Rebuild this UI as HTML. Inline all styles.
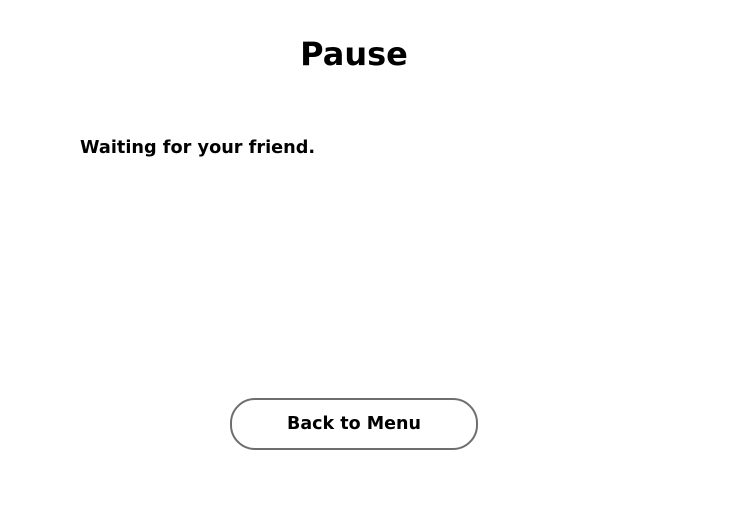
<!DOCTYPE html>
<html><head><style>
html,body{margin:0;padding:0;background:#fff;width:741px;height:530px;overflow:hidden;font-family:"DejaVu Sans",sans-serif;font-weight:bold;color:#000}
h1{position:absolute;left:0;width:708px;top:32px;margin:0;text-align:center;font-size:32px;line-height:44px}
.w{position:absolute;left:80px;top:136px;font-size:17.7px;line-height:24px}
.b{position:absolute;left:230px;top:398px;width:244px;height:48px;border:2px solid #6e6e6e;border-radius:25px;text-align:center;line-height:48px;font-size:17.5px}
</style></head><body>
<h1>Pause</h1>
<div class="w">Waiting for your friend.</div>
<div class="b">Back to Menu</div>
</body></html>
